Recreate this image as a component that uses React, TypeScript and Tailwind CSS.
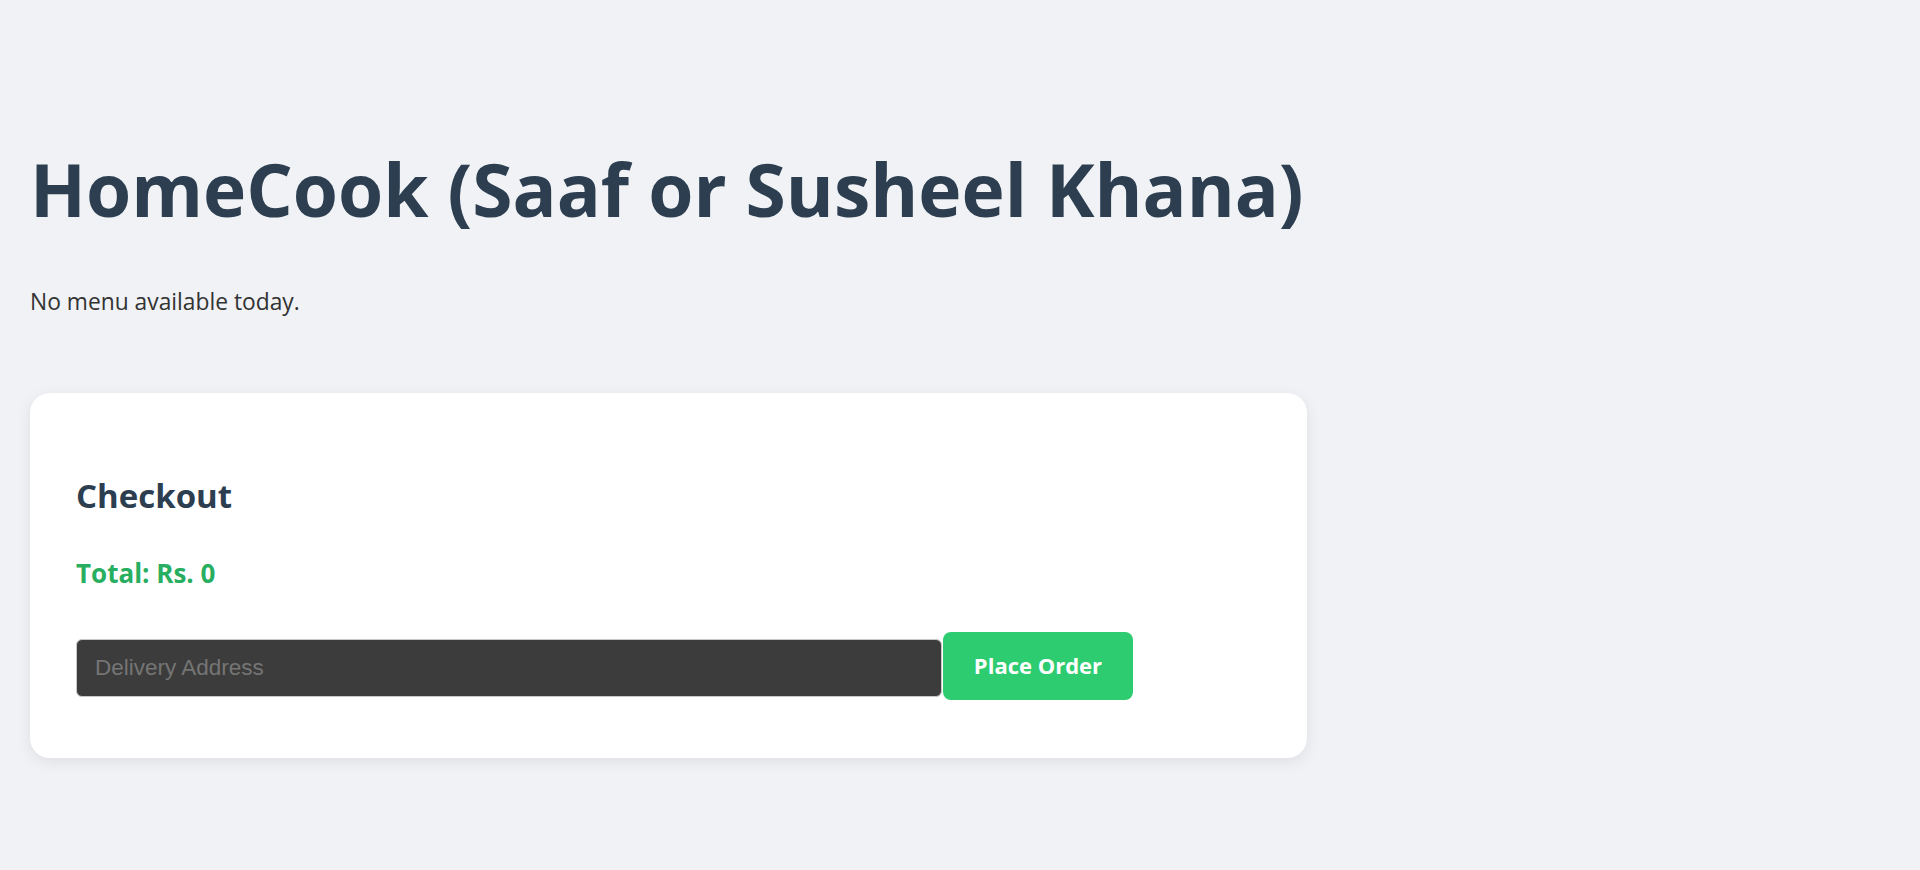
import React from "react";

export default function App() {
  return (
    <div
      className="min-h-screen w-full bg-[#f0f2f5] pl-[30px] pt-[152px]"
      style={{ fontFamily: '"Open Sans", "Noto Sans", sans-serif' }}
    >
      <h1 className="text-[73.1px] font-bold leading-none text-[#2c3e50] whitespace-nowrap">
        HomeCook (Saaf or Susheel Khana)
      </h1>
      <p className="mt-[66px] text-[22.8px] leading-none text-[#333333]">
        No menu available today.
      </p>
      <div className="mt-[79px] w-[1277px] rounded-[20px] bg-white pl-[46px] pt-[86px] pb-[58px] shadow-[0_4px_15px_rgba(0,0,0,0.08)]">
        <h2 className="text-[33px] font-bold leading-none text-[#2c3e50]">Checkout</h2>
        <p className="mt-[48px] text-[26px] font-bold leading-none text-[#27ae60]">Total: Rs. 0</p>
        <div className="mt-[46px] flex items-start gap-[1px]">
          <input
            type="text"
            placeholder="Delivery Address"
            className="mt-[7px] h-[58px] w-[866px] rounded-[6px] border border-[#c8c8c8] bg-[#3c3c3c] px-[18px] text-[22.5px] text-white outline-none placeholder:text-[#757575]"
            style={{ fontFamily: '"Liberation Sans", Arial, sans-serif' }}
          />
          <button className="h-[68px] w-[190px] rounded-[8px] bg-[#2ecc71] text-[22px] font-bold text-white">
            Place Order
          </button>
        </div>
      </div>
    </div>
  );
}
